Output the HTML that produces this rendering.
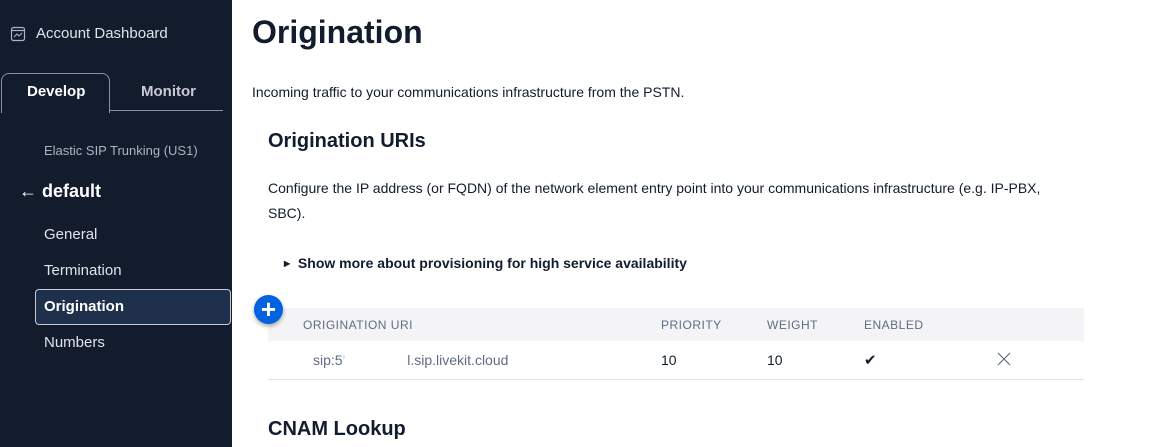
<!DOCTYPE html>
<html><head><meta charset="utf-8"><style>
*{margin:0;padding:0;box-sizing:border-box}
body{width:1158px;height:447px;overflow:hidden;background:#fff;font-family:"Liberation Sans",sans-serif;color:#121c2d;position:relative}
.sb{position:absolute;left:0;top:0;width:232px;height:447px;background:#121c2d;color:#fff}
.a{position:absolute}
.sb .t{color:#e1e3ea}
</style></head><body>
<div class="sb">
  <svg class="a" style="left:10px;top:26px" width="16" height="16" viewBox="0 0 16 16"><rect x="1.5" y="1.5" width="13" height="13" rx="2" fill="none" stroke="#aeb2c1" stroke-width="1.2"/><line x1="1.5" y1="4.5" x2="14.5" y2="4.5" stroke="#aeb2c1" stroke-width="1.2"/><polyline points="4,11 7,8 9,10 12,7" fill="none" stroke="#aeb2c1" stroke-width="1.1"/></svg>
  <div class="a t" style="left:36px;top:25px;font-size:15px">Account Dashboard</div>
  <div class="a" style="left:1px;top:73px;width:109px;height:40px;border:1px solid #8891aa;border-bottom:none;border-radius:8px 8px 0 0"></div>
  <div class="a" style="left:110px;top:110px;width:113px;height:1px;background:#8891aa"></div>
  <div class="a" style="left:27px;top:83px;font-size:15px;font-weight:bold">Develop</div>
  <div class="a t" style="left:141px;top:83px;font-size:15px;font-weight:bold;color:#c8cbd6">Monitor</div>
  <div class="a" style="left:44px;top:143px;font-size:13px;color:#aeb2c1">Elastic SIP Trunking (US1)</div>
  <div class="a" style="left:19px;top:181px;font-size:18px;font-weight:bold">←&nbsp;default</div>
  <div class="a t" style="left:44px;top:226px;font-size:15px">General</div>
  <div class="a t" style="left:44px;top:262px;font-size:15px">Termination</div>
  <div class="a" style="left:35px;top:289px;width:196px;height:36px;background:#1f304c;border:1.5px solid #c8cbd6;border-radius:4px"></div>
  <div class="a" style="left:44px;top:298px;font-size:15px;font-weight:bold">Origination</div>
  <div class="a t" style="left:44px;top:334px;font-size:15px">Numbers</div>
</div>
<div class="a" style="left:252px;top:14px;font-size:32px;font-weight:bold">Origination</div>
<div class="a" style="left:252px;top:84px;font-size:14px">Incoming traffic to your communications infrastructure from the PSTN.</div>
<div class="a" style="left:268px;top:130px;font-size:20px;font-weight:bold">Origination URIs</div>
<div class="a" style="left:268px;top:176px;width:808px;font-size:14px;line-height:25px">Configure the IP address (or FQDN) of the network element entry point into your communications infrastructure (e.g. IP-PBX, SBC).</div>
<div class="a" style="left:284px;top:255px;font-size:14px;font-weight:bold"><span style="font-size:8px;vertical-align:2px">▶</span>&nbsp; Show more about provisioning for high service availability</div>
<div class="a" style="left:268px;top:308px;width:816px;height:33px;background:#f4f4f6"></div>
<div class="a" style="left:268px;top:379px;width:816px;height:1px;background:#e1e3ea"></div>
<div class="a" style="left:254px;top:295px;width:29px;height:29px;border-radius:50%;background:#0263e0;box-shadow:0 2px 4px rgba(0,0,0,.35);color:#fff;font-size:26px;line-height:28px;text-align:center;font-weight:bold">+</div>
<div class="a" style="left:303px;top:318px;font-size:12px;color:#606b85;letter-spacing:.5px">ORIGINATION URI</div>
<div class="a" style="left:661px;top:318px;font-size:12px;color:#606b85;letter-spacing:.5px">PRIORITY</div>
<div class="a" style="left:767px;top:318px;font-size:12px;color:#606b85;letter-spacing:.5px">WEIGHT</div>
<div class="a" style="left:864px;top:318px;font-size:12px;color:#606b85;letter-spacing:.5px">ENABLED</div>
<div class="a" style="left:313px;top:352px;font-size:14px;color:#606b85">sip:5<span style="color:#ccc">'</span><span style="display:inline-block;width:62px"></span>l.sip.livekit.cloud</div>
<div class="a" style="left:661px;top:352px;font-size:14px">10</div>
<div class="a" style="left:767px;top:352px;font-size:14px">10</div>
<div class="a" style="left:864px;top:351px;font-size:15px">✔</div>
<svg class="a" style="left:997px;top:352px" width="14" height="14"><path d="M1 1L13 13M13 1L1 13" stroke="#606b85" stroke-width="1.2"/></svg>
<div class="a" style="left:268px;top:418px;font-size:20px;font-weight:bold">CNAM Lookup</div>
</body></html>
